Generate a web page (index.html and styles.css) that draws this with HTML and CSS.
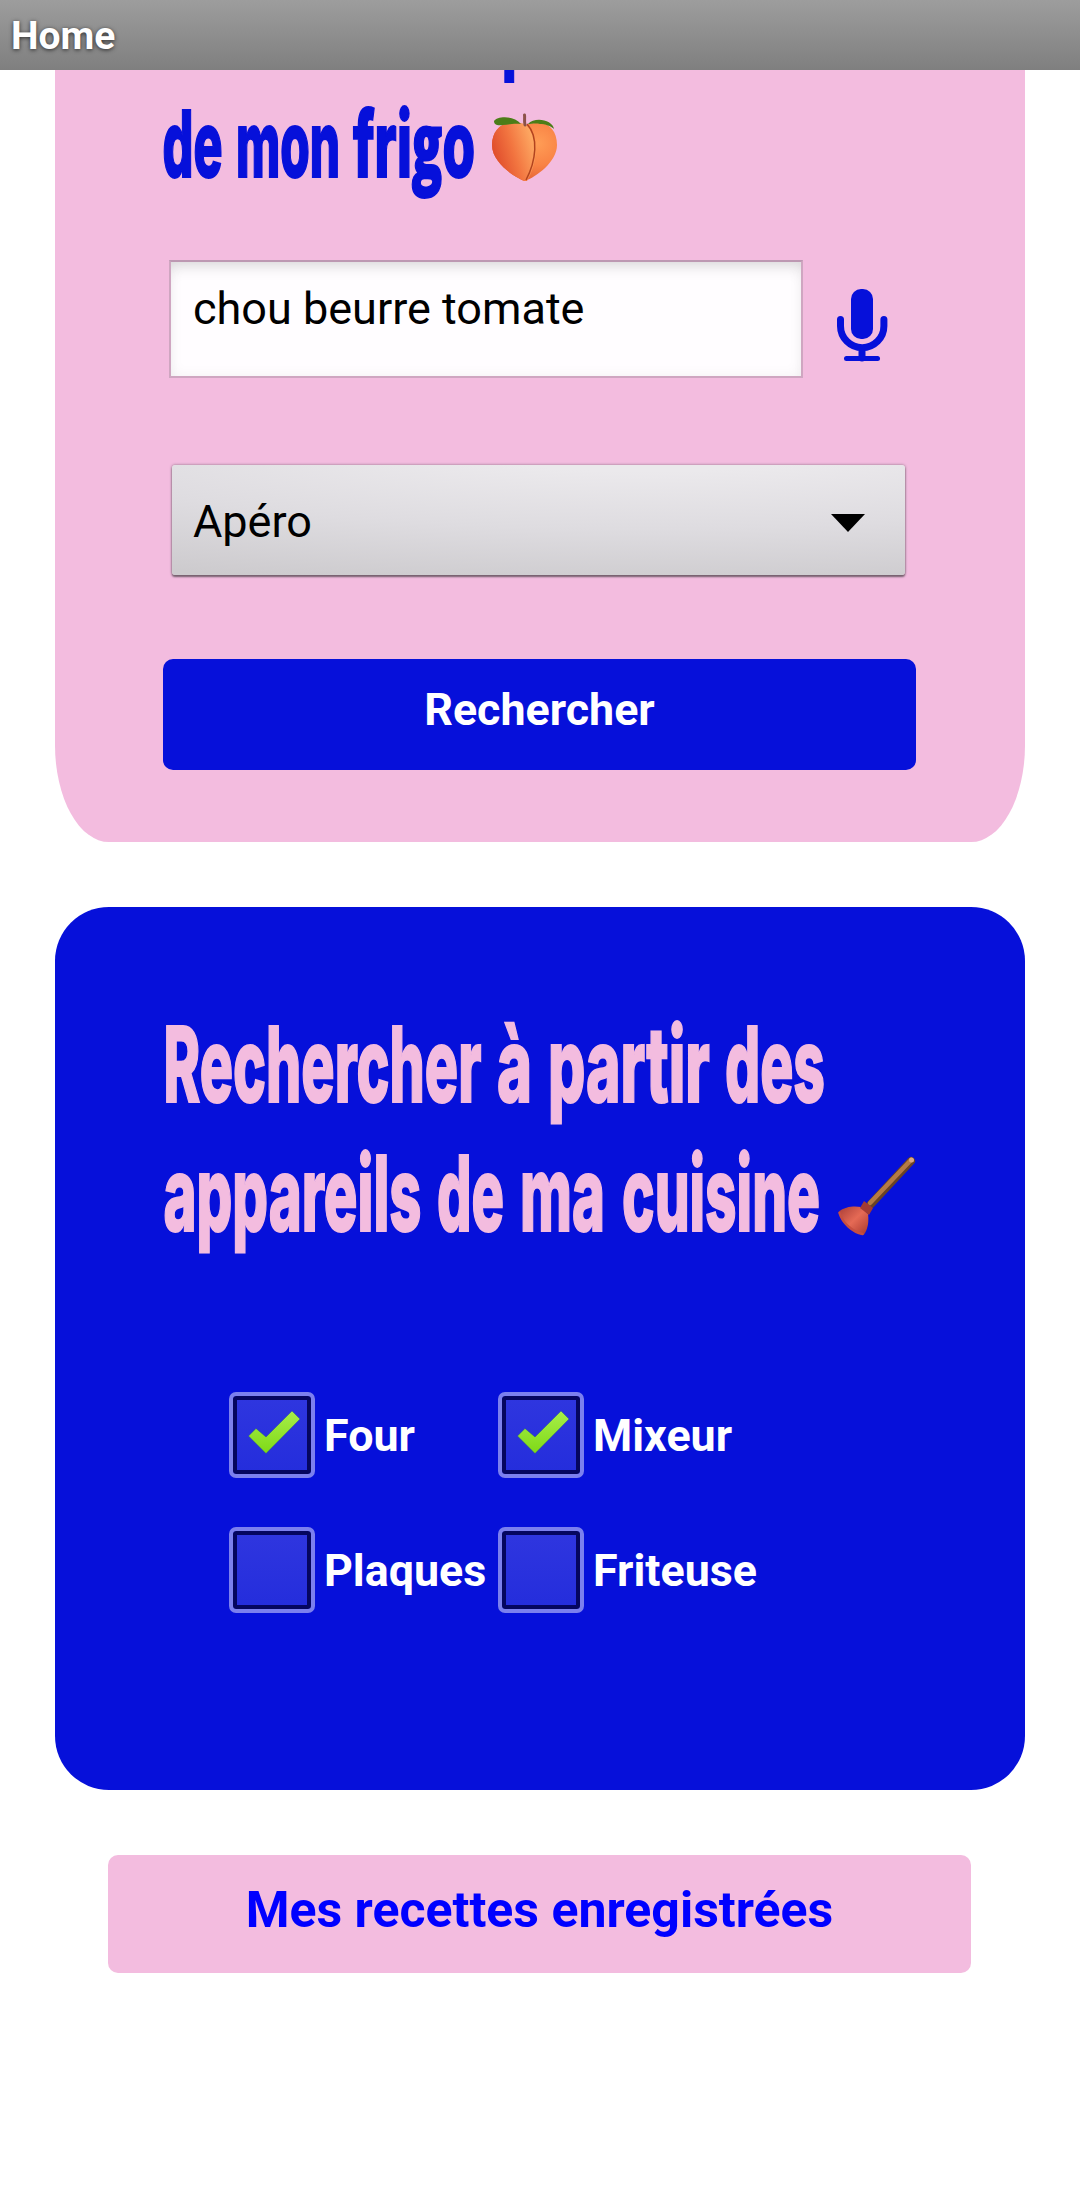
FILE: index.html
```html
<!DOCTYPE html>
<html lang="fr">
<head>
<meta charset="utf-8">
<title>Home</title>
<link rel="stylesheet" href="styles.css">
</head>
<body>
<header class="titlebar">Home</header>
<main class="page">
  <section class="card card-pink">
    <svg class="heading heading-small" viewBox="163 70 753 190" width="753" height="190">
      <defs>
        <radialGradient id="peach" cx=".7" cy=".35" r=".75"><stop offset="0" stop-color="#ff9d56"/><stop offset=".5" stop-color="#f98345"/><stop offset="1" stop-color="#df5a30"/></radialGradient>
        <linearGradient id="cleft" x1="0" y1=".7" x2="1" y2=".3"><stop offset="0" stop-color="#dc4428"/><stop offset=".5" stop-color="#f27540"/><stop offset="1" stop-color="#ffae66"/></linearGradient>
      </defs>
      <text x="502" y="63" textLength="142" lengthAdjust="spacingAndGlyphs">partir</text>
      <text x="162.500" y="177" textLength="60" lengthAdjust="spacingAndGlyphs">de</text>
      <text x="236" y="177" textLength="104" lengthAdjust="spacingAndGlyphs">mon</text>
      <text x="353" y="177" textLength="122" lengthAdjust="spacingAndGlyphs">fri<tspan class="double-g">g</tspan>o</text>
      <path d="M525 181c-7-2-33-17-33-36 0-13 8-22 20-22 6 0 10 0 14 2 4-2 8-2 13-2 11 0 18 9 18 22 0 17-21 32-32 36z" fill="url(#peach)"/>
      <path d="M525 181c-7-2-33-17-33-36 0-13 8-22 20-22 6 0 10 0 14 2 13 12 12 37 1 56z" fill="url(#cleft)"/>
      <path d="M527 124c12 13 9 37-1 56" fill="none" stroke="#b2431f" stroke-width="1.500"/>
      <path d="M494 121c3-5 20-6 27 3-8-1-13 1-18 1-5 1-9 0-9-4zM528 124c7-8 25-4 26 5-3-3-9-5-14-5-4-1-9 0-12 0z" fill="#4c7d18"/>
      <path d="M525 125c-1-4 0-7-.500-10" fill="none" stroke="#8c5148" stroke-width="3" stroke-linecap="round"/>
    </svg>
    <div class="search-row">
      <div class="input">chou beurre tomate</div>
      <svg class="mic" viewBox="0 0 52 74" width="52" height="74" fill="none" stroke="#0610da">
        <rect x="15" y="1" width="22" height="50" rx="10" fill="#0610da" stroke="none"/>
        <path d="M4.500 31.500V38a21.700 21.700 0 0 0 43.400 0v-6.500M26 60v10" stroke-width="7" stroke-linecap="round"/>
        <path d="M10.500 70.500h31" stroke-width="5" stroke-linecap="round"/>
      </svg>
    </div>
    <div class="select"><span>Apéro</span>
      <svg class="arrow" viewBox="0 0 34 18" width="34" height="18"><path d="M0 0h34L17 18z"/></svg>
    </div>
    <div class="button">Rechercher</div>
  </section>

  <section class="card card-blue">
    <svg class="heading heading-large" viewBox="163 997 753 270" width="753" height="270">
      <defs>
        <linearGradient id="cup" x1="0" y1="0" x2="1" y2="1"><stop offset="0" stop-color="#a83c37"/><stop offset=".5" stop-color="#e56a55"/><stop offset="1" stop-color="#a8382f"/></linearGradient>
      </defs>
      <text x="163.500" y="1102" textLength="318" lengthAdjust="spacingAndGlyphs">Rechercher</text>
      <text x="497" y="1102" textLength="35" lengthAdjust="spacingAndGlyphs">à</text>
      <text x="548" y="1102" textLength="162" lengthAdjust="spacingAndGlyphs">partir</text>
      <text x="725" y="1102" textLength="100" lengthAdjust="spacingAndGlyphs">des</text>
      <text x="163.500" y="1231" textLength="258" lengthAdjust="spacingAndGlyphs">appareils</text>
      <text x="437" y="1231" textLength="67" lengthAdjust="spacingAndGlyphs">de</text>
      <text x="520" y="1231" textLength="85" lengthAdjust="spacingAndGlyphs">ma</text>
      <text x="622" y="1231" textLength="198" lengthAdjust="spacingAndGlyphs">cuisine</text>
      <path d="M871 1204L911 1161" stroke="#6b4325" stroke-width="8" stroke-linecap="round"/>
      <path d="M870 1203L911 1160" stroke="#b57b45" stroke-width="4.500" stroke-linecap="round"/>
      <circle cx="911.500" cy="1160" r="2.500" fill="#d9a783"/>
      <path d="M838.500 1212C845 1206 855 1206 861 1207L868 1214C869 1221 868 1230 863.500 1235C853 1233 842 1224 838.500 1212z" fill="url(#cup)"/>
      <path d="M839.500 1213c3 10 13 19 23 21" fill="none" stroke="#c64f40" stroke-width="2.500" stroke-linecap="round"/>
      <path d="M860 1208l4-7 9 7-4 7z" fill="#a33b34"/>
    </svg>
    <div class="options">
      <div class="option"><span class="box"><svg viewBox="0 0 85 85" width="85" height="85"><defs><linearGradient id="tick" x1="0" y1="0" x2="0" y2="1"><stop offset="0" stop-color="#a8ee4a"/><stop offset="1" stop-color="#7ed916"/></linearGradient></defs><path d="M19.500 44l7.500-7.500 10 8.500 26-26 8 8-34 34.500z" fill="url(#tick)" stroke="#174b8c" stroke-opacity=".4"/></svg></span><span class="label">Four</span></div>
      <div class="option"><span class="box"><svg viewBox="0 0 85 85" width="85" height="85"><path d="M19.500 44l7.500-7.500 10 8.500 26-26 8 8-34 34.500z" fill="url(#tick)" stroke="#174b8c" stroke-opacity=".4"/></svg></span><span class="label">Mixeur</span></div>
      <div class="option"><span class="box"></span><span class="label">Plaques</span></div>
      <div class="option"><span class="box"></span><span class="label">Friteuse</span></div>
    </div>
  </section>

  <div class="saved">Mes recettes enregistrées</div>
</main>
</body>
</html>
```
FILE: styles.css
```css
* { box-sizing: border-box; }

body {
  margin: 0;
  height: 2204px;
  overflow: hidden;
  background: #fff;
  font-family: Roboto, sans-serif;
  font-size: 45px;
  line-height: 52px;
  color: #000;
}

svg { display: block; flex: none; }

.titlebar {
  height: 70px;
  padding: 1px 0 0 11px;
  background: linear-gradient(#9d9d9d, #7f7f7f);
  color: #fff;
  font-size: 39px;
  font-weight: 700;
  line-height: 70px;
  text-shadow: 0 1px 4px rgba(0, 0, 0, .7);
}

.page {
  display: flex;
  flex-direction: column;
  padding: 0 55px;
}

.card { padding: 0 109px 0 108px; }

.card-pink {
  height: 772px;
  background: #f3bcdf;
  border-radius: 0 0 54px 54px / 0 0 97px 97px;
}

.heading { font-family: Inter, sans-serif; font-weight: 800; }
.heading text { stroke-width: 2px; }
.heading-small { font-size: 92px; fill: #0610da; }
.heading-small text { stroke: #0610da; }
.heading-large { font-size: 104px; fill: #f3bcdf; }
.heading-large text { stroke: #f3bcdf; }
.double-g { font-family: "Open Sans", sans-serif; font-size: 88px; }

.search-row { display: flex; padding-left: 6px; }

.input {
  width: 634px;
  height: 118px;
  padding: 21px 0 0 22px;
  border: 2px solid #cfa6c1;
  border-top-color: #bd98b2;
  background: #fffdff;
  box-shadow: inset 0 12px 16px -8px rgba(0, 0, 0, .13), inset 0 0 14px rgba(0, 0, 0, .05);
}

.mic { margin: 28px 0 0 33px; }

.select {
  display: flex;
  align-items: center;
  justify-content: space-between;
  width: 733px;
  height: 110px;
  margin: 87px 0 0 9px;
  padding: 3px 40px 0 21px;
  border-radius: 3px;
  background: radial-gradient(ellipse 140% 130% at 65% -20%, #ebe9ec 20%, #dedce0 60%, #cdcbce 100%);
  box-shadow: 0 2px 2px #75606e, 0 0 3px #8b6f82;
}

.arrow { margin-top: 2px; }

.button {
  height: 111px;
  margin-top: 84px;
  padding-top: 25px;
  border-radius: 10px;
  background: #0610da;
  color: #fff;
  font-size: 44.800px;
  font-weight: 700;
  text-align: center;
}

.card-blue {
  height: 883px;
  margin-top: 65px;
  padding-top: 90px;
  border-radius: 54px;
  background: #0610da;
}

.options {
  display: grid;
  grid-template-columns: 269px 300px;
  grid-auto-rows: 86px;
  row-gap: 49px;
  padding: 125px 0 0 66px;
}

.option {
  display: flex;
  align-items: center;
  gap: 9px;
  color: #fff;
  font-size: 44.800px;
  font-weight: 700;
}

.label { padding-top: 2px; }

.box {
  flex: none;
  width: 86px;
  height: 86px;
  border: 4px solid #7c80ee;
  border-radius: 7px;
  background: linear-gradient(#2f36df, #242ddc);
  box-shadow: inset 0 0 0 4px #05065f;
}

.box svg { margin: -4px; }

.saved {
  height: 118px;
  margin: 65px 54px 0 53px;
  padding-top: 21px;
  border-radius: 10px;
  background: #f3bcdf;
  color: #00f;
  font-size: 50px;
  font-weight: 700;
  line-height: 68px;
  text-align: center;
}
```
